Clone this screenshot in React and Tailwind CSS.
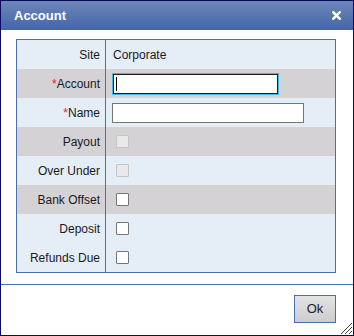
export default function App() {
  const rows = [
    { label: "Site", type: "text", value: "Corporate", bg: "bg-[#e5edf6]" },
    { label: "Account", req: true, type: "input-focus", bg: "bg-[#d5d2d5]" },
    { label: "Name", req: true, type: "input", bg: "bg-[#e5edf6]" },
    { label: "Payout", type: "cb-disabled", bg: "bg-[#d5d2d5]" },
    { label: "Over Under", type: "cb-disabled", bg: "bg-[#e5edf6]" },
    { label: "Bank Offset", type: "cb", bg: "bg-[#d5d2d5]" },
    { label: "Deposit", type: "cb", bg: "bg-[#e5edf6]" },
    { label: "Refunds Due", type: "cb", bg: "bg-[#e5edf6]" },
  ];
  return (
    <div className="w-[354px] h-[336px] border border-[#0b0b5e] bg-white flex flex-col relative" style={{ fontFamily: '"Liberation Sans", Arial, sans-serif' }}>
      <div className="h-[29px] shrink-0 bg-gradient-to-b from-[#6c87ba] to-[#4466a5] flex items-center justify-between pl-[13px] pr-[12px]">
        <span className="text-white font-bold text-[13px]">Account</span>
        <svg width="9" height="9" viewBox="0 0 9 9">
          <path d="M1.2 1.2 L7.8 7.8 M7.8 1.2 L1.2 7.8" stroke="#fff" strokeWidth="2.4" strokeLinecap="square" />
        </svg>
      </div>
      <div className="pt-[9px] pl-[15px] pr-[17px] pb-[11px]">
        <div className="w-[320px] border border-[#4a6eb0]">
          {rows.map((r) => (
            <div key={r.label} className={`flex h-[29px] ${r.bg}`}>
              <div className="w-[89px] shrink-0 border-r border-[#4a6eb0] flex items-center justify-end pr-[5px] text-[12px] text-[#1a1a1a]">
                {r.req && <span className="text-[#e8202a]">*</span>}
                {r.label}
              </div>
              <div className="flex-1 flex items-center pl-[6px] text-[12px] text-[#1a1a1a]">
                {r.type === "text" && <span className="pl-[1px]">{r.value}</span>}
                {r.type === "input-focus" && (
                  <div className="w-[167px] h-[22px] border border-[#3cb7e4] p-0">
                    <div className="w-full h-full border border-[#222] bg-white flex items-center pl-[2px]">
                      <div className="w-px h-[14px] bg-black" />
                    </div>
                  </div>
                )}
                {r.type === "input" && (
                  <div className="w-[192px] h-[20px] border border-[#767676] bg-white" />
                )}
                {r.type === "cb-disabled" && (
                  <div className="ml-[4px] w-[13px] h-[13px] border border-[#c5c5c5] bg-[#e9e9e9] rounded-[1px]" />
                )}
                {r.type === "cb" && (
                  <div className="ml-[4px] w-[13px] h-[13px] border border-[#767676] bg-white rounded-[1px]" />
                )}
              </div>
            </div>
          ))}
        </div>
      </div>
      <div className="border-t border-[#4a6eb0] flex justify-end pt-[10px] pr-[17px]">
        <button className="w-[42px] h-[28px] border border-[#4a6eb0] bg-gradient-to-b from-[#e3e3e3] to-[#cdcdcd] text-[13px] text-[#222]" style={{ fontFamily: '"Liberation Sans", Arial, sans-serif' }}>
          Ok
        </button>
      </div>
      <svg className="absolute right-0 bottom-0" width="13" height="13" viewBox="0 0 13 13">
        <path d="M12 1 L1 12 M12 5 L5 12 M12 9 L9 12" stroke="#444" strokeWidth="1" />
      </svg>
    </div>
  );
}
